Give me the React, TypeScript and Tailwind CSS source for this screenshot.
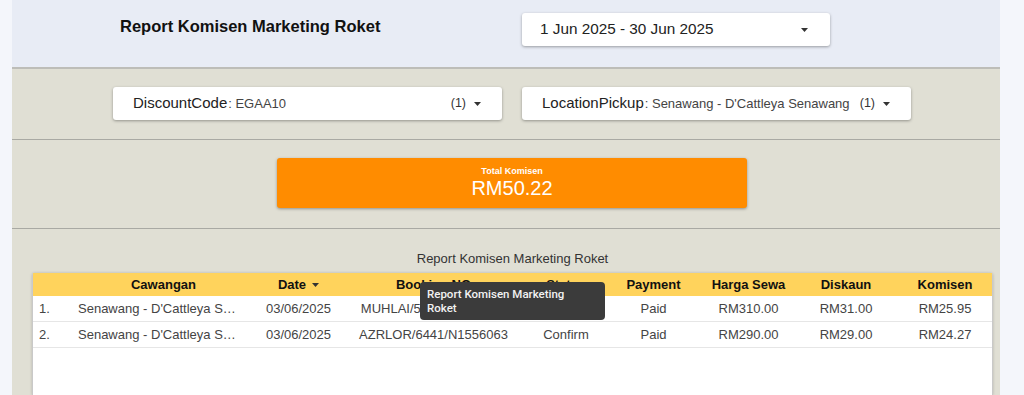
const rows = [
  {
    no: "1.",
    cawangan: "Senawang - D'Cattleya Senawang",
    date: "03/06/2025",
    booking: "MUHLAI/5912/N1556021",
    status: "Confirm",
    payment: "Paid",
    harga: "RM310.00",
    diskaun: "RM31.00",
    komisen: "RM25.95",
  },
  {
    no: "2.",
    cawangan: "Senawang - D'Cattleya Senawang",
    date: "03/06/2025",
    booking: "AZRLOR/6441/N1556063",
    status: "Confirm",
    payment: "Paid",
    harga: "RM290.00",
    diskaun: "RM29.00",
    komisen: "RM24.27",
  },
];

function Caret() {
  return (
    <svg width="7" height="4" viewBox="0 0 7 4" className="shrink-0">
      <path d="M0 0 L7 0 L3.5 4 Z" fill="#333" />
    </svg>
  );
}

function Dropdown({ label, value, count }: { label: string; value: string; count: string }) {
  return (
    <div className="flex h-[33px] w-[389px] items-center rounded-[3px] bg-white pl-[20px] pr-[21px] shadow-[0_1px_3px_rgba(0,0,0,0.35)]">
      <span className="text-[15px] text-[#222]">{label}</span>
      <span className="ml-[1px] truncate text-[13px] text-[#444]">: {value}</span>
      <span className="ml-auto pl-[3px] text-[12.5px] text-[#333]">{count}</span>
      <span className="ml-[8px]">
        <Caret />
      </span>
    </div>
  );
}

const cols = "grid grid-cols-[38px_185px_85px_185px_80px_95px_95px_100px_98px]";

export default function App() {
  return (
    <div className="flex h-[395px] w-[1024px] overflow-hidden bg-[#f4f6fb] font-['Liberation_Sans',Arial,sans-serif]">
      <div className="w-[12px] shrink-0" />
      <main className="flex w-[988px] shrink-0 flex-col bg-[#e0dfd4]">
        {/* header */}
        <div className="flex h-[69px] shrink-0 gap-[20px] border-b-2 border-[#bdbdb8] bg-[#e8ecf5] pl-[101px] pt-[13px]">
          <div className="w-[389px] pl-[7px] pt-[3px]">
            <h1 className="text-[16.5px] font-bold leading-[21px] text-[#111]">Report Komisen Marketing Roket</h1>
          </div>
          <div className="flex h-[33px] w-[308px] items-center rounded-[3px] bg-white pl-[18px] pr-[22px] shadow-[0_1px_3px_rgba(0,0,0,0.35)]">
            <span className="text-[15.3px] text-[#222]">1 Jun 2025 - 30 Jun 2025</span>
            <span className="ml-auto">
              <Caret />
            </span>
          </div>
        </div>

        {/* filters */}
        <div className="flex h-[71px] shrink-0 gap-[20px] border-b border-[#a9a9a3] pl-[101px] pt-[18px]">
          <Dropdown label="DiscountCode" value="EGAA10" count="(1)" />
          <Dropdown label="LocationPickup" value="Senawang - D'Cattleya Senawang" count="(1)" />
        </div>

        {/* total */}
        <div className="h-[89px] shrink-0 border-b border-[#a9a9a3] pl-[265px] pt-[18px]">
          <div className="flex h-[50px] w-[470px] flex-col items-center justify-center rounded-[3px] bg-[#ff8c00] text-white shadow-[0_1px_3px_rgba(0,0,0,0.35)]">
            <span className="text-[9px] font-bold leading-[11px]">Total Komisen</span>
            <span className="text-[20px] leading-[23px]">RM50.22</span>
          </div>
        </div>

        {/* table */}
        <div className="relative flex flex-1 flex-col pl-[20px] pt-[22px]">
          <div className="w-[961px] text-center text-[13px] leading-[15px] text-[#333]">Report Komisen Marketing Roket</div>
          <div className="mt-[7px] flex w-[961px] flex-1 flex-col rounded-t-[3px] border-x border-[#c9c9c9] bg-white shadow-[0_0_3px_rgba(0,0,0,0.2)]">
            <div className={`${cols} h-[23px] items-center bg-[#ffd35c] text-[13px] font-bold text-[#111]`}>
              <span />
              <span className="text-center">Cawangan</span>
              <span className="flex items-center justify-center gap-[6px]">
                Date <Caret />
              </span>
              <span className="text-center">Booking NO</span>
              <span className="text-center">Status</span>
              <span className="text-center">Payment</span>
              <span className="text-center">Harga Sewa</span>
              <span className="text-center">Diskaun</span>
              <span className="text-center">Komisen</span>
            </div>
            {rows.map((r) => (
              <div key={r.no} className={`${cols} h-[26px] items-center border-b border-[#e6e6e6] text-[13px] text-[#444]`}>
                <span className="pl-[6px]">{r.no}</span>
                <span className="truncate pl-[7px] pr-[14px]">{r.cawangan}</span>
                <span className="text-center">{r.date}</span>
                <span className="text-center">{r.booking}</span>
                <span className="text-center">{r.status}</span>
                <span className="text-center">{r.payment}</span>
                <span className="text-center">{r.harga}</span>
                <span className="text-center">{r.diskaun}</span>
                <span className="text-center">{r.komisen}</span>
              </div>
            ))}
          </div>

          {/* tooltip */}
          <div className="absolute left-[408px] top-[53px] w-[185px] rounded-[4px] bg-[#3b3b3b] px-[7px] py-[5px] font-['Roboto',sans-serif] text-[11.5px] font-medium leading-[14px] text-[#f2f2f2]">
            Report Komisen Marketing
            <br />
            Roket
          </div>
        </div>
      </main>
    </div>
  );
}
